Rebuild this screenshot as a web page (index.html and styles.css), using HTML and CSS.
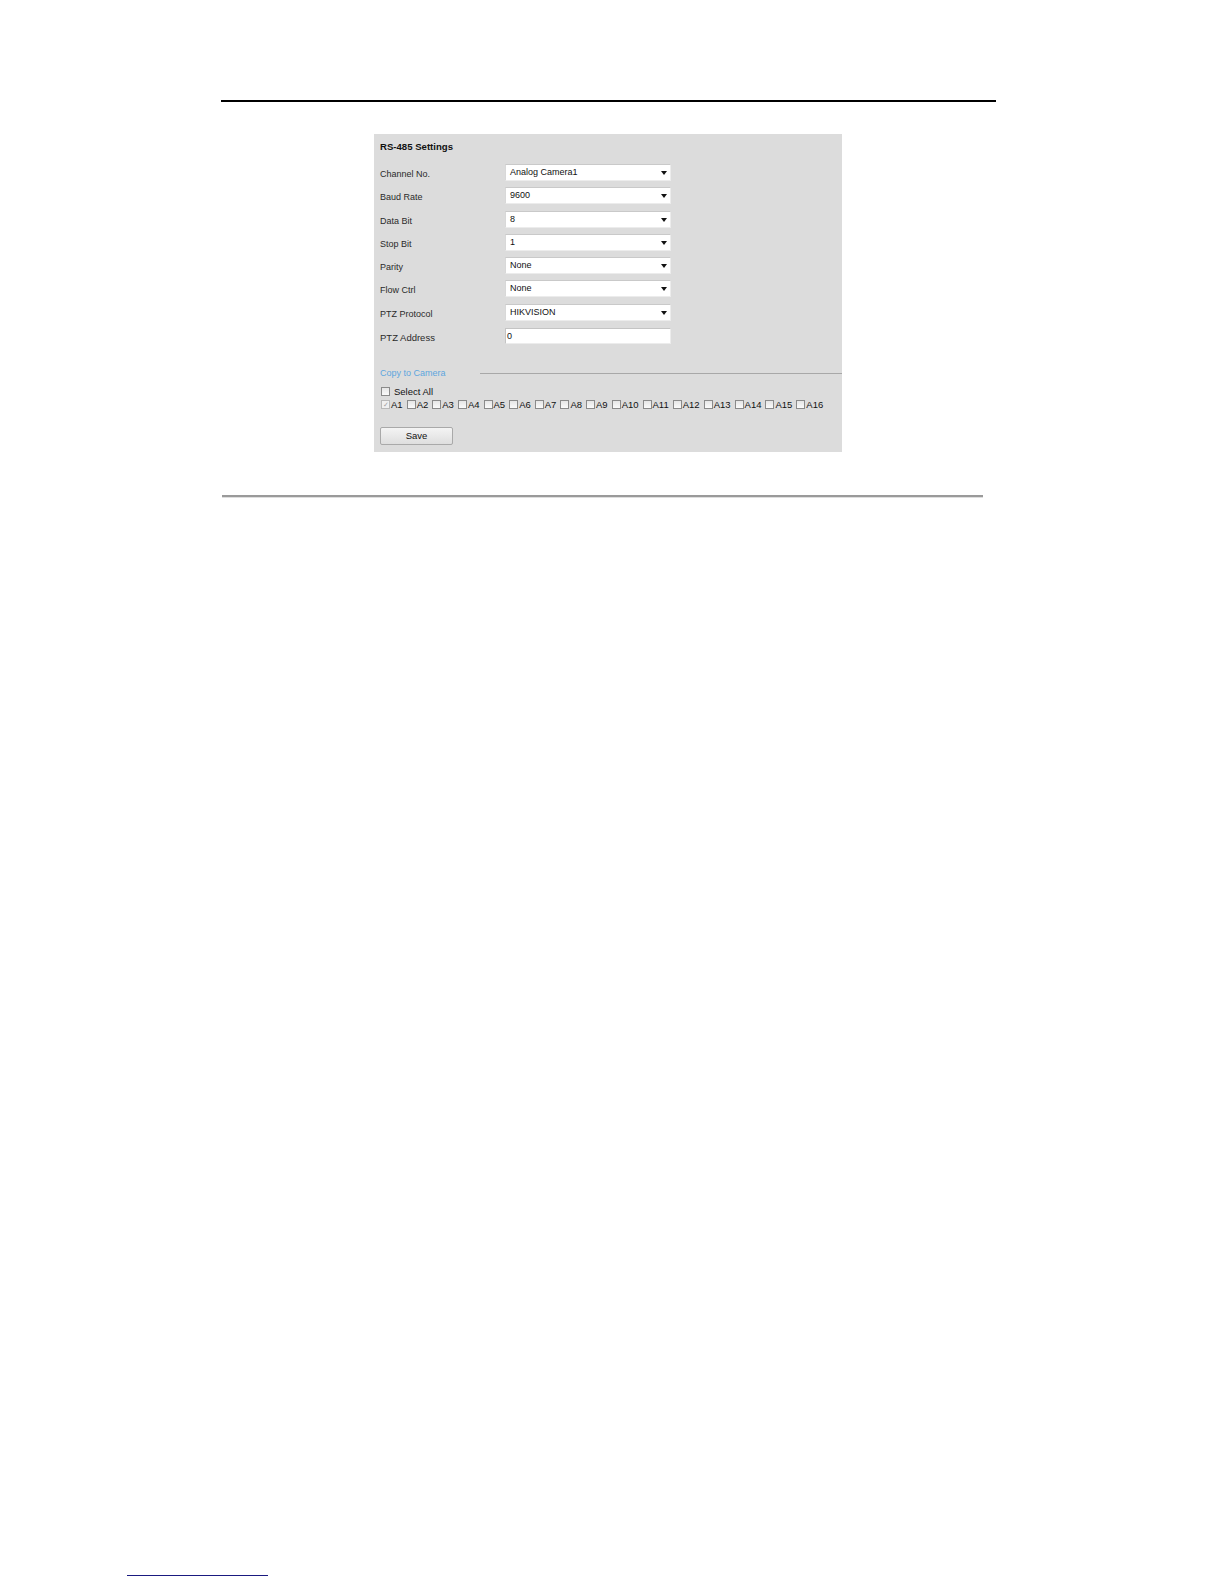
FILE: index.html
```html
<!DOCTYPE html>
<html>
<head>
<meta charset="utf-8">
<link rel="stylesheet" href="styles.css">
</head>
<body>
<div class="page">
  <div class="rule-top"></div>
  <div class="panel">
    <div class="title">RS-485 Settings</div>
    <div class="form">
      <div class="row"><span class="label">Channel No.</span><span class="select">Analog Camera1<i class="arrow"></i></span></div>
      <div class="row"><span class="label">Baud Rate</span><span class="select">9600<i class="arrow"></i></span></div>
      <div class="row"><span class="label">Data Bit</span><span class="select">8<i class="arrow"></i></span></div>
      <div class="row"><span class="label">Stop Bit</span><span class="select">1<i class="arrow"></i></span></div>
      <div class="row"><span class="label">Parity</span><span class="select">None<i class="arrow"></i></span></div>
      <div class="row"><span class="label">Flow Ctrl</span><span class="select">None<i class="arrow"></i></span></div>
      <div class="row"><span class="label">PTZ Protocol</span><span class="select">HIKVISION<i class="arrow"></i></span></div>
      <div class="row"><span class="label label-lg">PTZ Address</span><span class="input">0</span></div>
    </div>
    <div class="copy-head"><span class="copy-title">Copy to Camera</span><span class="copy-line"></span></div>
    <div class="check-row select-all"><span class="cb"></span><span class="cb-text">Select All</span></div>
    <div class="check-row cams">
      <span class="cam"><span class="cb checked">✓</span>A1</span>
      <span class="cam"><span class="cb"></span>A2</span>
      <span class="cam"><span class="cb"></span>A3</span>
      <span class="cam"><span class="cb"></span>A4</span>
      <span class="cam"><span class="cb"></span>A5</span>
      <span class="cam"><span class="cb"></span>A6</span>
      <span class="cam"><span class="cb"></span>A7</span>
      <span class="cam"><span class="cb"></span>A8</span>
      <span class="cam"><span class="cb"></span>A9</span>
      <span class="cam"><span class="cb"></span>A10</span>
      <span class="cam"><span class="cb"></span>A11</span>
      <span class="cam"><span class="cb"></span>A12</span>
      <span class="cam"><span class="cb"></span>A13</span>
      <span class="cam"><span class="cb"></span>A14</span>
      <span class="cam"><span class="cb"></span>A15</span>
      <span class="cam"><span class="cb"></span>A16</span>
    </div>
    <div class="btn">Save</div>
  </div>
  <div class="rule-bottom"></div>
  <div class="footer-link"></div>
</div>
</body>
</html>
```

FILE: styles.css
```css
html, body {
  margin: 0;
  padding: 0;
  background: #ffffff;
}
.page {
  width: 1224px;
  height: 1584px;
  box-sizing: border-box;
  padding-top: 100px;
  overflow: hidden;
  font-family: "Liberation Sans", Arial, sans-serif;
  color: #1e1e1e;
}
.rule-top {
  margin: 0 0 0 221px;
  width: 775px;
  height: 2px;
  background: #000;
}
.panel {
  margin: 32px 0 0 374px;
  width: 468px;
  height: 318px;
  box-sizing: border-box;
  background: #dcdcdc;
  padding: 7px 0 0 6px;
  font-size: 9px;
}
.title {
  font-weight: bold;
  font-size: 9.6px;
  line-height: 12px;
  height: 12px;
  color: #111;
}
.form {
  margin-top: 11px;
  display: flex;
  flex-direction: column;
  gap: 6.3px;
}
.row {
  display: flex;
  align-items: center;
  height: 17px;
}
.label {
  width: 125px;
  padding-top: 3px;
  color: #2a2a2a;
}
.label-lg {
  font-size: 9.5px;
}
.select, .input {
  position: relative;
  width: 166px;
  height: 17px;
  box-sizing: border-box;
  background: #fff;
  border: 1px solid #ececec;
  border-top-color: #c9c9c9;
  border-left-color: #d8d8d8;
  line-height: 15px;
  padding-left: 4px;
  color: #111;
}
.input {
  height: 16px;
  line-height: 14px;
  padding-left: 1px;
  border: 1px solid #c4c4c4;
  border-bottom-color: #ececec;
  border-right-color: #ececec;
}
.arrow {
  position: absolute;
  right: 3px;
  top: 6px;
  width: 0;
  height: 0;
  border-left: 3.5px solid transparent;
  border-right: 3.5px solid transparent;
  border-top: 4px solid #111;
}
.copy-head {
  margin-top: 23px;
  display: flex;
  align-items: center;
  height: 12px;
}
.copy-title {
  color: #5ca6de;
  width: 100px;
}
.copy-line {
  flex: 1;
  height: 1px;
  background: #a8a8a8;
}
.check-row {
  display: flex;
  align-items: center;
  height: 13px;
  font-size: 9.5px;
  color: #111;
}
.select-all {
  margin-top: 6px;
}
.cb-text {
  margin-left: 4px;
}
.cb {
  display: inline-block;
  width: 9px;
  height: 9px;
  box-sizing: border-box;
  border: 1px solid #8a8a8a;
  background: linear-gradient(#e6e6e6, #fafafa);
  margin-left: 1px;
  font-size: 7px;
  line-height: 7px;
  text-align: center;
  color: #a0a0a0;
  vertical-align: middle;
}
.cb.checked {
  border-color: #b8b8b8;
  background: #f0f0f0;
}
.cams {
  gap: 3px;
}
.cam {
  display: inline-flex;
  align-items: center;
  gap: 1px;
}
.btn {
  margin-top: 16px;
  width: 73px;
  height: 18px;
  box-sizing: border-box;
  border: 1px solid #a9a9a9;
  border-radius: 2px;
  background: linear-gradient(#f4f4f4, #dedede);
  text-align: center;
  line-height: 16px;
  font-size: 9.5px;
  color: #111;
}
.rule-bottom {
  margin: 43px 0 0 222px;
  width: 761px;
  height: 2px;
  background: #9a9a9a;
  border-bottom: 1px solid #dedede;
}
.footer-link {
  margin: 1077px 0 0 127px;
  width: 141px;
  height: 1px;
  background: #1a1a80;
}
```
